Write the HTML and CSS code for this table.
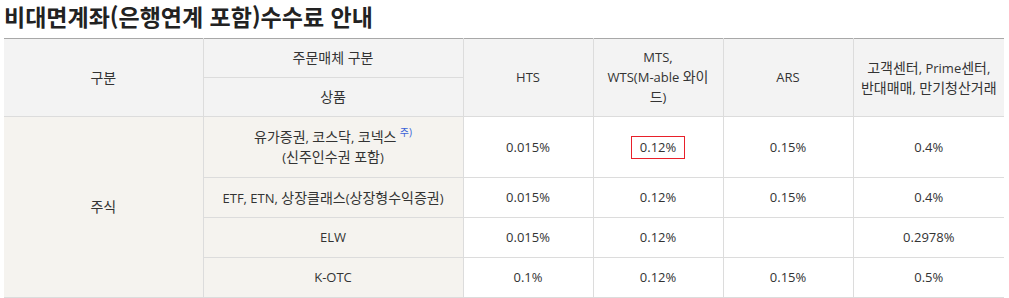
FILE: index.html
```html
<!DOCTYPE html>
<html lang="ko">
<head>
<meta charset="utf-8">
<link rel="stylesheet" href="styles.css">
</head>
<body>
<h2 class="title">비대면계좌(은행연계 포함)수수료 안내</h2>
<table class="fee">
  <colgroup>
    <col class="c-a"><col class="c-b"><col class="c-prod"><col class="c-n"><col class="c-n"><col class="c-n"><col class="c-last">
  </colgroup>
  <thead>
    <tr>
      <th colspan="2" rowspan="2"><span class="ko">구분</span></th>
      <th><span class="ko">주문매체 구분</span></th>
      <th rowspan="2">HTS</th>
      <th rowspan="2">MTS,<br>WTS(M-able <span class="ko">와이</span><br><span class="ko">드</span>)</th>
      <th rowspan="2">ARS</th>
      <th rowspan="2" class="last"><span class="ko">고객센터</span>, Prime<span class="ko">센터</span>,<br><span class="ko">반대매매</span>, <span class="ko">만기청산거래</span></th>
    </tr>
    <tr>
      <th><span class="ko">상품</span></th>
    </tr>
  </thead>
  <tbody>
    <tr class="r-tall">
      <td colspan="2" rowspan="4" class="side"><span class="ko">주식</span></td>
      <td class="side"><span class="ko">유가증권</span>, <span class="ko">코스닥</span>, <span class="ko">코넥스</span> <sup class="note">주)</sup><br>(<span class="ko">신주인수권 포함</span>)</td>
      <td>0.015%</td>
      <td><span class="hl">0.12%</span></td>
      <td>0.15%</td>
      <td class="last">0.4%</td>
    </tr>
    <tr>
      <td class="side">ETF, ETN, <span class="ko">상장클래스</span>(<span class="ko">상장형수익증권</span>)</td>
      <td>0.015%</td>
      <td>0.12%</td>
      <td>0.15%</td>
      <td class="last">0.4%</td>
    </tr>
    <tr>
      <td class="side">ELW</td>
      <td>0.015%</td>
      <td>0.12%</td>
      <td></td>
      <td class="last">0.2978%</td>
    </tr>
    <tr>
      <td class="side">K-OTC</td>
      <td>0.1%</td>
      <td>0.12%</td>
      <td>0.15%</td>
      <td class="last">0.5%</td>
    </tr>
    <tr>
      <td class="side">&nbsp;</td>
      <td class="side">&nbsp;</td>
      <td class="side">&nbsp;</td>
      <td></td>
      <td></td>
      <td></td>
      <td class="last"></td>
    </tr>
  </tbody>
</table>
</body>
</html>
```

FILE: styles.css
```css
html, body {
  margin: 0;
  padding: 0;
  background: #fff;
}
body {
  padding: 0 4px;
  font-family: "Open Sans", "Noto Sans CJK KR", sans-serif;
  color: #333;
  font-size: 13px;
}
.title {
  margin: 0 0 6px 0;
  height: 32px;
  line-height: 32px;
  font-size: 23px;
  font-weight: 700;
  color: #222;
  font-family: "Noto Sans CJK KR", sans-serif;
}
.fee {
  border-collapse: collapse;
  table-layout: fixed;
  width: 1000px;
  border-top: 1px solid #a8a8a8;
}
.c-a { width: 99px; }
.c-b { width: 100px; }
.c-prod { width: 260px; }
.c-n { width: 130px; }
.c-last { width: 151px; }
.fee th, .fee td {
  border-right: 1px solid #dcdcdc;
  border-bottom: 1px solid #dcdcdc;
  text-align: center;
  vertical-align: middle;
  line-height: 19px;
  padding: 0 2px;
  font-weight: 400;
}
.ko {
  font-size: 14px;
  line-height: 19px;
}
.fee th {
  background: #f3f3f3;
  height: 38px;
}
.fee th.last, .fee td.last {
  border-right: none;
}
.fee td {
  height: 39px;
}
.fee tr.r-tall td { height: 60px; }
.fee td.side {
  background: #f5f3ef;
}
.note {
  color: #3c64d8;
  font-size: 10px;
  vertical-align: 6px;
  line-height: 0;
}
.hl {
  display: inline-block;
  border: 1px solid #e8202a;
  padding: 0 8px;
  line-height: 21px;
}
```
